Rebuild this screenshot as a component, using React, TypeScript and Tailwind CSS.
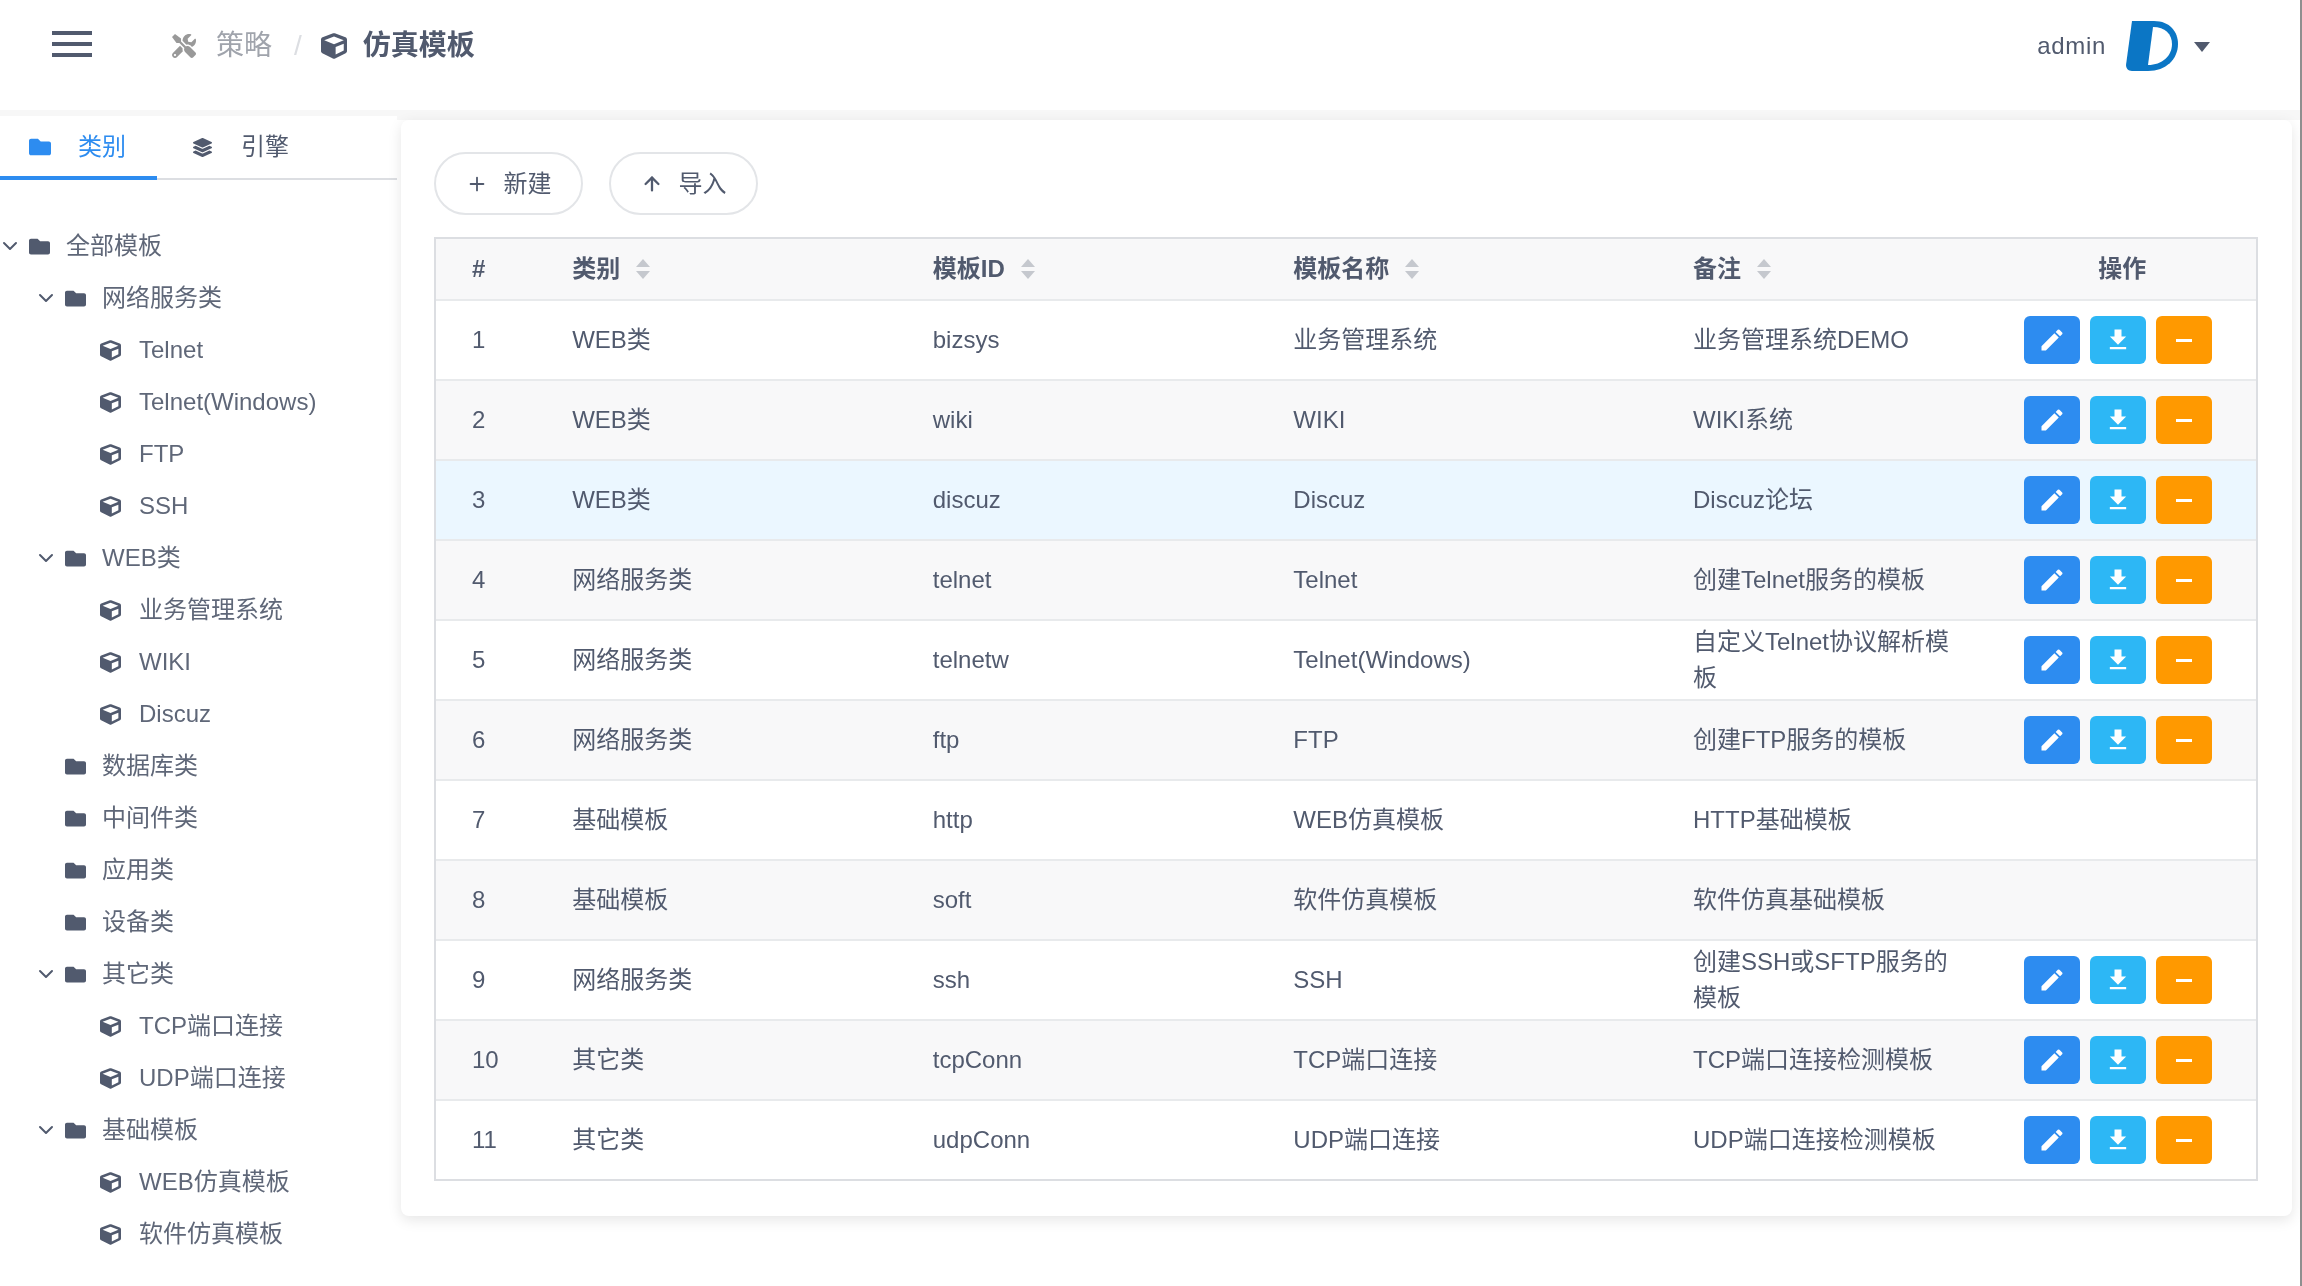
import { ArrowUp, ChevronDown, Plus } from "lucide-react"
import { FaCube, FaFolder, FaLayerGroup, FaTools } from "react-icons/fa"
import { MdEdit, MdFileDownload } from "react-icons/md"

type TreeNode = { level: 0 | 1 | 2; label: string; open?: boolean; leaf?: boolean }

const tree: TreeNode[] = [
    { level: 0, label: "全部模板", open: true },
    { level: 1, label: "网络服务类", open: true },
    { level: 2, label: "Telnet", leaf: true },
    { level: 2, label: "Telnet(Windows)", leaf: true },
    { level: 2, label: "FTP", leaf: true },
    { level: 2, label: "SSH", leaf: true },
    { level: 1, label: "WEB类", open: true },
    { level: 2, label: "业务管理系统", leaf: true },
    { level: 2, label: "WIKI", leaf: true },
    { level: 2, label: "Discuz", leaf: true },
    { level: 1, label: "数据库类" },
    { level: 1, label: "中间件类" },
    { level: 1, label: "应用类" },
    { level: 1, label: "设备类" },
    { level: 1, label: "其它类", open: true },
    { level: 2, label: "TCP端口连接", leaf: true },
    { level: 2, label: "UDP端口连接", leaf: true },
    { level: 1, label: "基础模板", open: true },
    { level: 2, label: "WEB仿真模板", leaf: true },
    { level: 2, label: "软件仿真模板", leaf: true },
]

const rows = [
    { category: "WEB类", id: "bizsys", name: "业务管理系统", note: "业务管理系统DEMO", actions: true },
    { category: "WEB类", id: "wiki", name: "WIKI", note: "WIKI系统", actions: true },
    { category: "WEB类", id: "discuz", name: "Discuz", note: "Discuz论坛", actions: true },
    { category: "网络服务类", id: "telnet", name: "Telnet", note: "创建Telnet服务的模板", actions: true },
    { category: "网络服务类", id: "telnetw", name: "Telnet(Windows)", note: "自定义Telnet协议解析模板", actions: true },
    { category: "网络服务类", id: "ftp", name: "FTP", note: "创建FTP服务的模板", actions: true },
    { category: "基础模板", id: "http", name: "WEB仿真模板", note: "HTTP基础模板", actions: false },
    { category: "基础模板", id: "soft", name: "软件仿真模板", note: "软件仿真基础模板", actions: false },
    { category: "网络服务类", id: "ssh", name: "SSH", note: "创建SSH或SFTP服务的模板", actions: true },
    { category: "其它类", id: "tcpConn", name: "TCP端口连接", note: "TCP端口连接检测模板", actions: true },
    { category: "其它类", id: "udpConn", name: "UDP端口连接", note: "UDP端口连接检测模板", actions: true },
]

const levelPadding = { 0: "pl-0", 1: "pl-[36px]", 2: "pl-[72px]" }

const SortCaret = () => (
    <svg width="16" height="20" viewBox="0 0 16 20" className="ml-[15px] shrink-0">
        <path d="M8 0 L15 8 L1 8 Z" fill="#c5c8ce" />
        <path d="M1 12 L15 12 L8 20 Z" fill="#c5c8ce" />
    </svg>
)

const Logo = () => (
    <svg width="52" height="50" viewBox="0 0 52 50">
        <path
            d="M6 0 L28 0 C44 0 52 11 52 23 C52 38 40 50 22 50 L6 50 C2 50 0 47 0 44 Z"
            fill="#0b76c5"
        />
        <path d="M27 6 C39 6 46 13 46 23 C46 35 36 44 22 44 Z" fill="#ffffff" />
    </svg>
)

const TreeRow = ({ node }: { node: TreeNode }) => (
    <div className={`flex h-[52px] items-center ${levelPadding[node.level]}`}>
        <div className="flex w-[20px] justify-center">
            {node.open && <ChevronDown size={24} strokeWidth={2} className="shrink-0 text-[#515a6e]" />}
        </div>
        <div className={`flex w-[22px] justify-center text-[#515a6e] ${node.leaf ? "ml-[7px]" : "ml-[8px]"}`}>
            {node.leaf ? <FaCube size={21} /> : <FaFolder size={21} />}
        </div>
        <span className={`text-[24px] text-[#5f6778] ${node.leaf ? "ml-[18px]" : "ml-[16px]"}`}>{node.label}</span>
    </div>
)

const ActionButtons = () => (
    <div className="flex gap-[10px] text-white">
        <button className="flex h-[48px] w-[56px] items-center justify-center rounded-[6px] bg-[#2d8cf0]">
            <MdEdit size={28} />
        </button>
        <button className="flex h-[48px] w-[56px] items-center justify-center rounded-[6px] bg-[#2db7f5]">
            <MdFileDownload size={28} />
        </button>
        <button className="flex h-[48px] w-[56px] items-center justify-center rounded-[6px] bg-[#ff9900]">
            <div className="h-[3px] w-[16px] bg-white" />
        </button>
    </div>
)

export default function App() {
    return (
        <div className="flex h-[1286px] w-[2302px] flex-col overflow-hidden border-r-2 border-[#8f8f8f] bg-white font-['Liberation_Sans','Noto_Sans_CJK_SC',sans-serif] text-[24px] text-[#515a6e] blur-[0.6px]">
            <header className="flex h-[116px] shrink-0 items-center border-b-[6px] border-[#f7f7f7] pb-[18px] pl-[52px] pr-[90px]">
                <div className="mb-[5px] flex w-[40px] flex-col gap-[7px]">
                    <div className="h-[4px] bg-[#515a6e]" />
                    <div className="h-[4px] bg-[#515a6e]" />
                    <div className="h-[4px] bg-[#515a6e]" />
                </div>
                <div className="ml-[80px] flex items-center text-[28px]">
                    <FaTools size={24} className="text-[#999999]" />
                    <span className="ml-[20px] text-[#a0a4ac]">策略</span>
                    <span className="ml-[22px] text-[#dcdee2]">/</span>
                    <FaCube size={26} className="ml-[19px]" />
                    <span className="ml-[16px] font-bold">仿真模板</span>
                </div>
                <div className="ml-auto flex items-center">
                    <span className="text-[24px] tracking-[0.7px]">admin</span>
                    <div className="ml-[20px]">
                        <Logo />
                    </div>
                    <svg width="16" height="10" viewBox="0 0 16 10" className="ml-[16px] mt-[2px]">
                        <path d="M0 0 L16 0 L8 10 Z" fill="#515a6e" />
                    </svg>
                </div>
            </header>

            <div className="flex flex-1">
                <aside className="w-[397px] shrink-0">
                    <div className="flex h-[64px] items-stretch">
                        <div className="flex w-[157px] items-center border-b-[4px] border-[#2d8cf0] pl-[29px] pt-[2px] text-[#2d8cf0]">
                            <FaFolder size={22} />
                            <span className="ml-[27px]">类别</span>
                        </div>
                        <div className="flex flex-1 items-center border-b-2 border-[#dcdee2] pl-[36px]">
                            <FaLayerGroup size={19} />
                            <span className="ml-[29px]">引擎</span>
                        </div>
                    </div>
                    <div className="pt-[40px]">
                        {tree.map((node) => (
                            <TreeRow key={node.label} node={node} />
                        ))}
                    </div>
                </aside>

                <main className="flex-1 pl-[4px] pr-[8px]">
                    <div className="-ml-[4px] -mr-[8px] h-[4px] bg-[#f7f7f7]" />
                    <div className="rounded-[8px] bg-white pb-[35px] pl-[33px] pr-[34px] pt-[32px] shadow-[0_4px_14px_rgba(0,0,0,0.1)]">
                        <div className="flex gap-[26px]">
                            <button className="flex h-[63px] w-[149px] items-center justify-center rounded-full border-2 border-[#e3e5e8]">
                                <Plus size={22} strokeWidth={2} />
                                <span className="ml-[16px]">新建</span>
                            </button>
                            <button className="flex h-[63px] w-[149px] items-center justify-center rounded-full border-2 border-[#e3e5e8]">
                                <ArrowUp size={22} strokeWidth={2.5} />
                                <span className="ml-[16px]">导入</span>
                            </button>
                        </div>

                        <div className="mt-[22px] border-x-2 border-t-2 border-[#dcdee2]">
                            <table className="w-full table-fixed border-separate border-spacing-0 [&_tr:last-child_td]:border-[#dcdee2]">
                                <colgroup>
                                    <col className="w-[98px]" />
                                    <col className="w-[360px]" />
                                    <col className="w-[360px]" />
                                    <col className="w-[399px]" />
                                    <col className="w-[333px]" />
                                    <col className="w-[267px]" />
                                </colgroup>
                                <thead>
                                    <tr className="bg-[#f8f8f9] text-left font-bold">
                                        <th className="h-[62px] border-b-2 border-[#e8eaec] pl-[36px]">#</th>
                                        {["类别", "模板ID", "模板名称", "备注"].map((title) => (
                                            <th key={title} className="border-b-2 border-[#e8eaec] pl-[38px]">
                                                <div className="flex items-center">
                                                    {title}
                                                    <SortCaret />
                                                </div>
                                            </th>
                                        ))}
                                        <th className="border-b-2 border-[#e8eaec] text-center">操作</th>
                                    </tr>
                                </thead>
                                <tbody>
                                    {rows.map((row, index) => (
                                        <tr
                                            key={row.id}
                                            className={
                                                index === 2
                                                    ? "bg-[#ebf7ff]"
                                                    : index % 2 === 1
                                                      ? "bg-[#f8f8f9]"
                                                      : "bg-white"
                                            }
                                        >
                                            <td className="h-[80px] border-b-2 border-[#e8eaec] pl-[36px]">{index + 1}</td>
                                            <td className="border-b-2 border-[#e8eaec] pl-[38px]">{row.category}</td>
                                            <td className="border-b-2 border-[#e8eaec] pl-[38px]">{row.id}</td>
                                            <td className="border-b-2 border-[#e8eaec] pl-[38px]">{row.name}</td>
                                            <td className="border-b-2 border-[#e8eaec] pl-[38px] pr-[33px] leading-[36px]">{row.note}</td>
                                            <td className="border-b-2 border-[#e8eaec] pl-[35px]">
                                                {row.actions && <ActionButtons />}
                                            </td>
                                        </tr>
                                    ))}
                                </tbody>
                            </table>
                        </div>
                    </div>
                </main>
            </div>
        </div>
    )
}
